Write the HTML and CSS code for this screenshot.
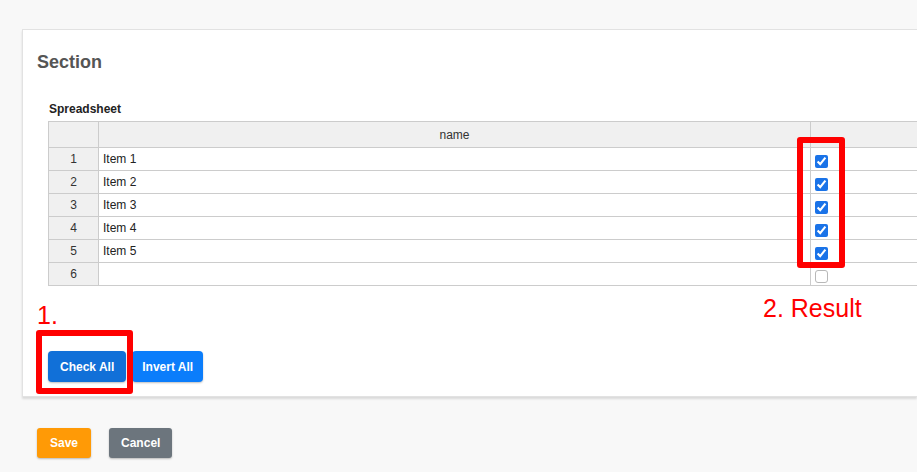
FILE: index.html
```html
<!DOCTYPE html>
<html lang="en">
<head>
  <meta charset="UTF-8">
  <title>Section</title>
  <link rel="stylesheet" href="styles.css">
</head>
<body>

<div class="page">

  <!-- main card -->
  <div class="card">
    <h2 class="section-title">Section</h2>

    <div class="field">
      <div class="field-label">Spreadsheet</div>
      <table class="sheet">
        <colgroup>
          <col class="col-num">
          <col class="col-name">
          <col class="col-check">
        </colgroup>
        <thead>
          <tr><th></th><th>name</th><th></th></tr>
        </thead>
        <tbody>
          <tr><td class="num">1</td><td>Item 1</td><td><input type="checkbox" checked></td></tr>
          <tr><td class="num">2</td><td>Item 2</td><td><input type="checkbox" checked></td></tr>
          <tr><td class="num">3</td><td>Item 3</td><td><input type="checkbox" checked></td></tr>
          <tr><td class="num">4</td><td>Item 4</td><td><input type="checkbox" checked></td></tr>
          <tr><td class="num">5</td><td>Item 5</td><td><input type="checkbox" checked></td></tr>
          <tr><td class="num">6</td><td></td><td><input type="checkbox"></td></tr>
        </tbody>
      </table>

      <div class="sheet-actions">
        <button class="btn btn-primary active">Check All</button>
        <button class="btn btn-primary btn-invert">Invert All</button>
      </div>
    </div>
  </div>

  <div class="form-actions">
    <button class="btn btn-save">Save</button>
    <button class="btn btn-cancel">Cancel</button>
  </div>

  <!-- annotations -->
  <div class="mark mark-result"></div>
  <div class="mark mark-button"></div>
  <div class="note note-one">1.</div>
  <div class="note note-two">2. Result</div>

</div>

</body>
</html>
```

FILE: styles.css
```css
* { box-sizing: border-box; margin: 0; padding: 0; }

body {
  background: #f8f8f8;
  font-family: "Liberation Sans", Arial, sans-serif;
  font-size: 12px;
  color: #222;
  overflow: hidden;
  width: 917px;
  height: 472px;
}

.page {
  position: relative;
  padding: 29px 0 0 22px;
  width: 917px;
  height: 472px;
  overflow: hidden;
}

/* card runs off the right edge of the window */
.card {
  background: #fff;
  border: 1px solid #e2e2e2;
  border-right: none;
  box-shadow: 0 2px 2px rgba(0, 0, 0, 0.12);
  padding: 21px 0 14px 14px;
  width: 895px;
  height: 368px;
  overflow: hidden;
}

.section-title {
  font-size: 18px;
  line-height: 22px;
  font-weight: bold;
  color: #555;
}

.field {
  padding: 29px 0 0 11px;
}

.field-label {
  font-weight: bold;
  line-height: 14px;
  padding-left: 1px;
  margin-bottom: 5px;
  color: #222;
}

.sheet {
  border-collapse: collapse;
  table-layout: fixed;
  width: 912px;
}

.col-num { width: 50px; }
.col-name { width: 712px; }
.col-check { width: 150px; }

.sheet th,
.sheet td {
  border: 1px solid #ccc;
  height: 23px;
  padding: 0 4px;
  font-size: 12px;
  vertical-align: middle;
  text-align: left;
}

.sheet th {
  background: #f0f0f0;
  font-weight: normal;
  text-align: center;
  height: 26px;
  color: #333;
}

.sheet td.num {
  background: #f0f0f0;
  text-align: center;
  color: #333;
}

.sheet input[type="checkbox"] {
  display: block;
  width: 13px;
  height: 13px;
  margin: 7px 0 2px 0;
  accent-color: #1a73e8;
}

.sheet input[type="checkbox"]:not(:checked) {
  appearance: none;
  border: 1px solid #b8b8b8;
  border-radius: 3px;
  background: #fff;
}

.sheet-actions {
  display: flex;
  gap: 6px;
  margin-top: 65px;
}

.btn {
  font-family: "Liberation Sans", Arial, sans-serif;
  font-size: 12px;
  font-weight: bold;
  color: #fff;
  border: none;
  border-radius: 4px;
  height: 31px;
  padding: 0 12px;
  box-shadow: 0 1px 2px rgba(0, 0, 0, 0.25);
  cursor: pointer;
}

.btn-primary { background: #0b7dfb; }
.btn-primary.active { background: #1170d8; }
.btn-invert { padding: 0 10px; }

.form-actions {
  display: flex;
  gap: 18px;
  margin: 31px 0 0 15px;
}

.btn-save {
  background: #ff9a06;
  height: 30px;
  padding: 0 13px;
  border-radius: 3px;
}

.btn-cancel {
  background: #6c757d;
  height: 30px;
  border-radius: 3px;
}

/* red annotation overlays */
.mark {
  position: absolute;
  border: 6px solid #ff0000;
  border-radius: 3px;
}

.mark-result {
  left: 797px;
  top: 137px;
  width: 48px;
  height: 131px;
}

.mark-button {
  left: 36px;
  top: 330px;
  width: 97px;
  height: 64px;
}

.note {
  position: absolute;
  color: #ff0000;
  font-size: 25px;
  line-height: 28px;
}

.note-one { left: 37px; top: 301px; }
.note-two { left: 763px; top: 294px; }
```
